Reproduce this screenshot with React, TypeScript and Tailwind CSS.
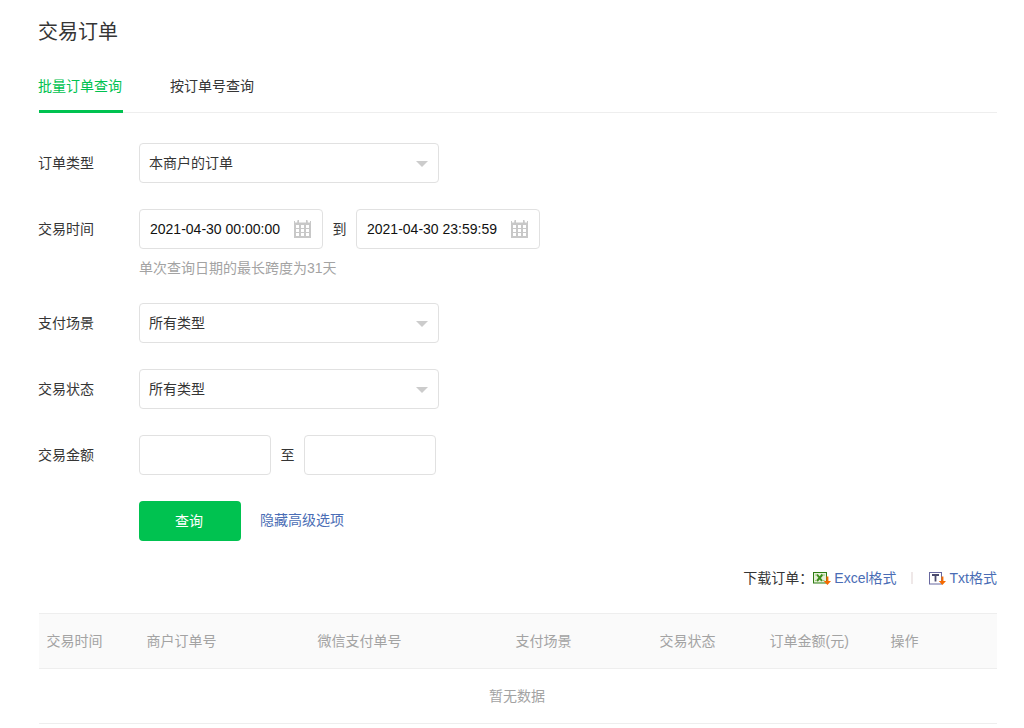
import React from "react";

function Caret() {
  return <span className="absolute right-[10px] top-[17px] w-0 h-0 border-x-[6px] border-x-transparent border-t-[6px] border-t-[#cccccc]" />;
}

function Select({ value }: { value: string }) {
  return (
    <div className="relative w-[300px] h-10 border border-[#e1e1e1] rounded-[4px] pl-[9px] leading-[38px] text-[#353535] text-sm">
      {value}
      <Caret />
    </div>
  );
}

function Calendar() {
  return (
    <svg className="absolute right-[11px] top-[10px]" width="17" height="18" viewBox="0 0 17 18">
      <rect x="0" y="1" width="17" height="17" fill="#c8c8c8" />
      <rect x="1" y="1" width="2.5" height="1.5" fill="#ffffff" />
      <rect x="5" y="1" width="7" height="1.5" fill="#ffffff" />
      <rect x="13.5" y="1" width="2.5" height="1.5" fill="#ffffff" />
      <rect x="3.5" y="0" width="1.5" height="3" fill="#c8c8c8" />
      <rect x="12" y="0" width="1.5" height="3" fill="#c8c8c8" />
      {[5, 9, 13].map((y) =>
        [2, 7, 12].map((x) => <rect key={`${x}-${y}`} x={x} y={y} width="3" height="3" fill="#ffffff" />)
      )}
    </svg>
  );
}

function DateBox({ value }: { value: string }) {
  return (
    <div className="relative w-[184px] h-10 border border-[#e1e1e1] rounded-[4px] pl-[10px] leading-[38px] text-[#111111] text-sm">
      {value}
      <Calendar />
    </div>
  );
}

function Row({ label, children }: { label: string; children: React.ReactNode }) {
  return (
    <div className="flex items-center h-10">
      <div className="w-[100px] text-sm text-[#353535] -translate-x-px">{label}</div>
      {children}
    </div>
  );
}

function ExcelIcon() {
  return (
    <svg width="18" height="13" viewBox="0 0 18 13" className="shrink-0">
      <rect x="0.5" y="0.5" width="13" height="10.5" fill="#e6f0d8" stroke="#2f7d14" />
      <path d="M4 2.5l5 6.5M9.5 2.5L4 9" stroke="#3f8f1f" strokeWidth="2" />
      <path d="M2 3h2M2 8.5h2M9.5 3h2.5M9.5 8.5h2" stroke="#9cc47a" strokeWidth="1" />
      <path d="M13.4 4.5h2V9H18l-3.6 4L10.8 9h2.6z" fill="#f56a00" />
    </svg>
  );
}

function TxtIcon() {
  return (
    <svg width="18" height="13" viewBox="0 0 18 13" className="shrink-0">
      <rect x="0.5" y="0.5" width="12" height="11.5" fill="#ffffff" stroke="#68689f" />
      <path d="M3 3h7M6.5 3v6.5" fill="none" stroke="#4a4a6e" strokeWidth="1.8" />
      <path d="M12.4 4.5h2V9H17l-3.6 4L9.8 9h2.6z" fill="#f56a00" />
    </svg>
  );
}

const cols = ["w-[100px]", "w-[171px]", "w-[198px]", "w-[144px]", "w-[110px]", "w-[121px]", "w-[114px]"];
const heads = ["交易时间", "商户订单号", "微信支付单号", "支付场景", "交易状态", "订单金额(元)", "操作"];

export default function App() {
  return (
    <div
      className="w-[1024px] h-[728px] overflow-hidden bg-white pl-[39px] pr-[27px] text-sm"
      style={{ fontFamily: '"Liberation Sans", "Noto Sans CJK SC", sans-serif' }}
    >
      <h1 className="pt-[18px] h-[62px] text-xl leading-[28px] font-normal text-[#353535] -translate-x-px">交易订单</h1>

      <div className="flex gap-12 h-[51px] border-b border-[#eeeeee]">
        <div className="relative w-[84px] pt-[14px] leading-5 text-[#00c250]">
          <span className="block -translate-x-px">批量订单查询</span>
          <span className="absolute left-0 right-0 bottom-[-1px] h-[3px] bg-[#00c250]" />
        </div>
        <div className="pt-[14px] leading-5 text-[#353535] -translate-x-px">按订单号查询</div>
      </div>

      <div className="mt-[30px] flex flex-col">
        <Row label="订单类型">
          <Select value="本商户的订单" />
        </Row>

        <div className="mt-[26px]">
          <Row label="交易时间">
            <DateBox value="2021-04-30 00:00:00" />
            <span className="w-[33px] text-center text-[#353535]">到</span>
            <DateBox value="2021-04-30 23:59:59" />
          </Row>
          <div className="ml-[100px] mt-[9px] h-[20px] leading-5 text-sm text-[#a3a3a3]">单次查询日期的最长跨度为31天</div>
        </div>

        <div className="mt-[25px]">
          <Row label="支付场景">
            <Select value="所有类型" />
          </Row>
        </div>
        <div className="mt-[26px]">
          <Row label="交易状态">
            <Select value="所有类型" />
          </Row>
        </div>
        <div className="mt-[26px]">
          <Row label="交易金额">
            <div className="w-[132px] h-10 border border-[#e1e1e1] rounded-[4px]" />
            <span className="w-[33px] text-center text-[#353535]">至</span>
            <div className="w-[132px] h-10 border border-[#e1e1e1] rounded-[4px]" />
          </Row>
        </div>

        <div className="mt-[26px] ml-[100px] flex items-center h-10">
          <button className="w-[102px] h-10 rounded-[4px] bg-[#00c250] text-white text-sm pr-[2px]">查询</button>
          <a className="ml-[19px] -mt-[2px] text-[#4a6db5]">隐藏高级选项</a>
        </div>
      </div>

      <div className="mt-[27px] h-5 flex items-center justify-end leading-5">
        <span className="text-[#353535]">下载订单：</span>
        <span className="flex items-center gap-[3px] text-[#4a6db5]">
          <ExcelIcon />
          Excel格式
        </span>
        <span className="ml-[14px] mr-[16px] w-[2px] h-3 bg-[#efe8e8]" />
        <span className="flex items-center gap-[3px] text-[#4a6db5]">
          <TxtIcon />
          Txt格式
        </span>
      </div>

      <table className="mt-[25px] w-[958px] table-fixed border-collapse">
        <colgroup>
          {cols.map((c, i) => (
            <col key={i} className={c} />
          ))}
        </colgroup>
        <thead>
          <tr className="h-[55px] bg-[#fafafa] border-y border-[#eeeeee]">
            {heads.map((h) => (
              <th key={h} className="pl-[7.5px] pr-2 text-left font-normal text-[#a3a3a3] text-sm">
                {h}
              </th>
            ))}
          </tr>
        </thead>
        <tbody>
          <tr className="h-[55px] border-b border-[#eeeeee]">
            <td colSpan={7} className="text-center text-[#a3a3a3] text-sm pr-[2px]">
              暂无数据
            </td>
          </tr>
        </tbody>
      </table>
    </div>
  );
}
